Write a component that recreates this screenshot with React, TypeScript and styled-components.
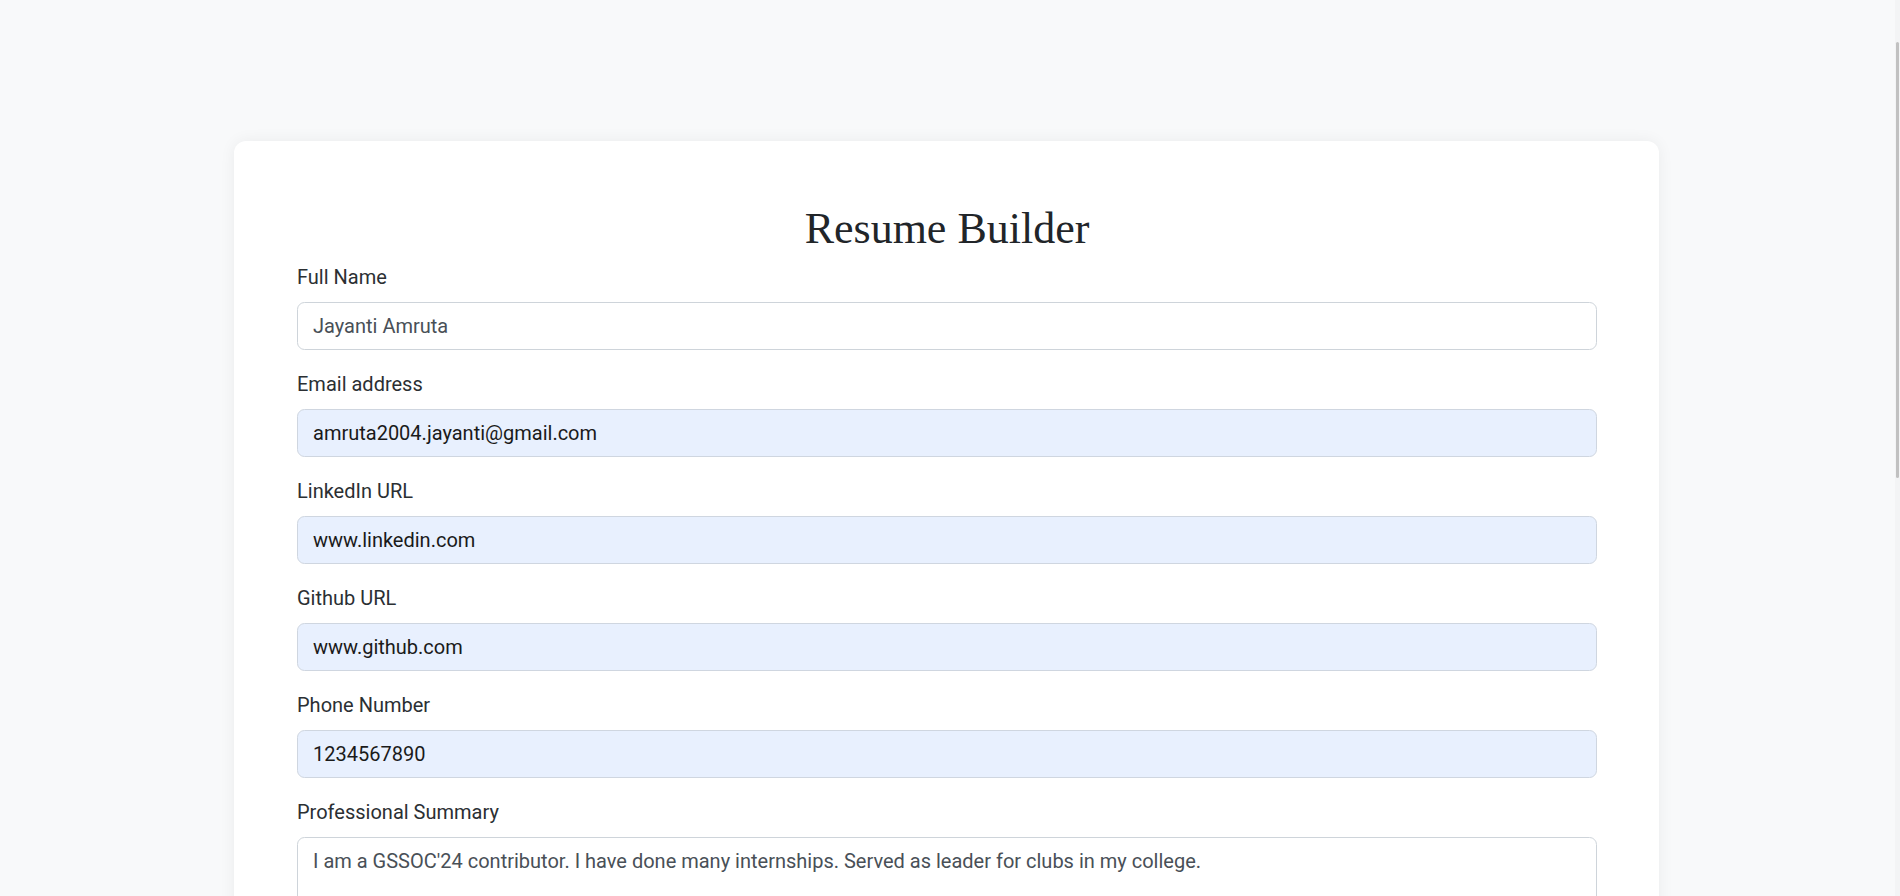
import React from "react";
import styled, { createGlobalStyle } from "styled-components";

const GlobalStyle = createGlobalStyle`
  html, body {
    margin: 0;
    padding: 0;
    background: #f8f9fa;
    overflow: hidden;
    font-family: Roboto, "Liberation Sans", Arial, sans-serif;
  }
  * { box-sizing: border-box; }
`;

const Page = styled.div`
  padding: 141px 7px 40px 0;
  min-height: 896px;
`;

const Card = styled.div`
  width: 1425px;
  margin: 0 auto;
  background: #ffffff;
  border-radius: 12px;
  box-shadow: 0 0 16px rgba(0, 0, 0, 0.06);
  padding: 61px 62px 40px 63px;
`;

const Title = styled.h1`
  margin: 0 0 7px;
  font-family: "Liberation Serif", "DejaVu Serif", serif;
  font-weight: 400;
  font-size: 44px;
  line-height: 53px;
  color: #212529;
  text-align: center;
`;

const Field = styled.div`
  margin-bottom: 19.5px;
`;

const Label = styled.label`
  display: block;
  font-size: 20px;
  line-height: 30px;
  margin-bottom: 10px;
  color: #2b2f33;
`;

const Input = styled.input<{ $filled?: boolean }>`
  display: block;
  width: 100%;
  height: 47.5px;
  padding: 7.5px 15px;
  font-family: Roboto, "Liberation Sans", Arial, sans-serif;
  font-size: 20px;
  line-height: 30px;
  border-radius: 7.5px;
  border: 1px solid ${(p) => (p.$filled ? "#cfd6e0" : "#ced4da")};
  background: ${(p) => (p.$filled ? "#e8f0fe" : "#ffffff")};
  color: ${(p) => (p.$filled ? "#1a1a1a" : "#495057")};
  outline: none;
`;

const TextArea = styled.textarea`
  display: block;
  width: 100%;
  height: 140px;
  padding: 7.5px 15px;
  font-family: Roboto, "Liberation Sans", Arial, sans-serif;
  font-size: 20px;
  line-height: 30px;
  border-radius: 7.5px;
  border: 1px solid #ced4da;
  color: #495057;
  resize: vertical;
  outline: none;
`;

const ScrollTrack = styled.div`
  position: fixed;
  top: 0;
  right: 0;
  width: 5px;
  height: 896px;
  background: #f3f4f5;
`;

const ScrollThumb = styled.div`
  position: absolute;
  top: 42px;
  left: 1px;
  width: 3px;
  height: 436px;
  border-radius: 2px;
  background: #c1c1c1;
`;

const fields = [
  { label: "Full Name", value: "Jayanti Amruta", filled: false },
  { label: "Email address", value: "amruta2004.jayanti@gmail.com", filled: true },
  { label: "LinkedIn URL", value: "www.linkedin.com", filled: true },
  { label: "Github URL", value: "www.github.com", filled: true },
  { label: "Phone Number", value: "1234567890", filled: true },
];

export default function App() {
  return (
    <>
      <GlobalStyle />
      <Page>
        <Card>
          <Title>Resume Builder</Title>
          {fields.map((f) => (
            <Field key={f.label}>
              <Label>{f.label}</Label>
              <Input $filled={f.filled} defaultValue={f.value} readOnly />
            </Field>
          ))}
          <Field>
            <Label>Professional Summary</Label>
            <TextArea
              readOnly
              defaultValue="I am a GSSOC'24 contributor. I have done many internships. Served as leader for clubs in my college."
            />
          </Field>
        </Card>
      </Page>
      <ScrollTrack>
        <ScrollThumb />
      </ScrollTrack>
    </>
  );
}
